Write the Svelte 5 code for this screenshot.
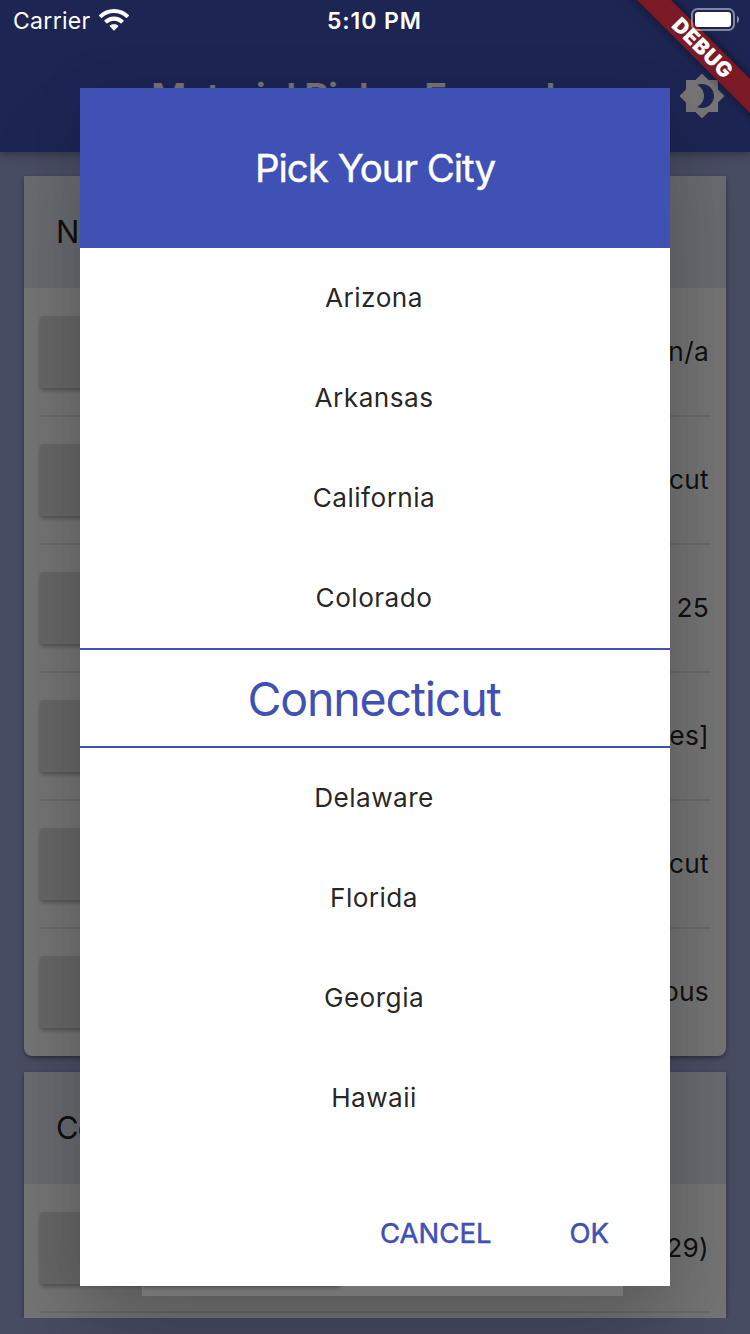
<script>
  const cities = ['Arizona', 'Arkansas', 'California', 'Colorado', 'Connecticut', 'Delaware', 'Florida', 'Georgia', 'Hawaii'];
  const selected = 'Connecticut';
  const cards = [
    { title: 'N', values: ['n/a', 'cut', '25', 'es]', 'cut', 'ous'] },
    { title: 'Co', values: ['29)', ''] }
  ];
</script>

<div class="screen">
  <header class="appbar">
    <h1>Material Picker Examples</h1>
    <svg class="theme" viewBox="0 0 24 24" width="48" height="48">
      <path d="M20 8.69V4h-4.69L12 .69 8.69 4H4v4.69L.69 12 4 15.31V20h4.69L12 23.31 15.31 20H20v-4.69L23.31 12 20 8.69zM12 18c-.89 0-1.74-.2-2.5-.55C11.56 16.5 13 14.42 13 12s-1.44-4.5-3.5-5.45C10.26 6.2 11.11 6 12 6c3.31 0 6 2.69 6 6s-2.69 6-6 6z" />
    </svg>
  </header>

  <main>
    {#each cards as card}
      <section class="card">
        <h2>{card.title}</h2>
        {#each card.values as value}
          <div class="row">
            <span class="button"></span>
            <span class="value">{value}</span>
          </div>
        {/each}
      </section>
    {/each}
  </main>

  <div class="scrim"></div>

  <div class="dialog">
    <div class="title">Pick Your City</div>
    <div class="wheel">
      {#each cities as city}
        <div class="city" class:selected={city === selected}><span>{city}</span></div>
      {/each}
    </div>
    <div class="actions">
      <span class="cancel">CANCEL</span>
      <span class="ok">OK</span>
    </div>
    <div class="gap"><i></i></div>
  </div>

  <div class="banner"><span>DEBUG</span></div>

  <div class="status">
    <span class="carrier">Carrier</span>
    <svg class="wifi" width="30" height="22" viewBox="0 0 30 22">
      <path d="M15 0C9.2 0 4 2.2.2 6c-.3.3-.3.7 0 1l1.8 1.8c.3.3.7.3 1 0C6.2 5.700 10.400 4 15 4s8.800 1.700 12 4.800c.3.3.7.3 1 0L29.800 7c.3-.3.3-.7 0-1C26 2.200 20.800 0 15 0z" />
      <path d="M15 7.600c-3.700 0-7 1.400-9.500 3.700-.3.3-.3.7 0 1l1.900 1.900c.3.3.7.3 1 0 1.800-1.600 4.100-2.500 6.600-2.500s4.800.9 6.600 2.500c.3.3.7.3 1 0l1.900-1.900c.3-.3.3-.7 0-1C22 9 18.700 7.600 15 7.600z" />
      <path d="M15 15.200c-1.600 0-3 .5-4.100 1.400-.3.3-.3.7 0 1l3.600 3.600c.3.3.7.3 1 0l3.600-3.600c.3-.3.3-.7 0-1-1.100-.9-2.500-1.400-4.100-1.400z" />
    </svg>
    <span class="time">5:10 PM</span>
    <svg class="battery" width="50" height="24" viewBox="0 0 50 24">
      <rect x="1" y="1" width="42" height="21" rx="5.500" fill="none" stroke="#fff" stroke-opacity=".45" stroke-width="2" />
      <rect x="4" y="4" width="36" height="15" rx="3" fill="#fff" />
      <path d="M46 8v7c1.300-.6 2-1.900 2-3.500S47.300 8.600 46 8z" fill="#fff" fill-opacity=".5" />
    </svg>
  </div>
</div>

<style>
  :global(body) { margin: 0; }
  .screen {
    position: relative;
    width: 750px;
    height: 1334px;
    overflow: hidden;
    display: flex;
    flex-direction: column;
    background: #9fa8da;
    font-family: Inter, "Liberation Sans", sans-serif;
    color: rgba(0, 0, 0, .87);
    white-space: nowrap;
  }
  .appbar {
    position: relative;
    z-index: 1;
    flex: none;
    box-sizing: border-box;
    height: 152px;
    padding: 41px 24px 0 151px;
    display: flex;
    align-items: center;
    justify-content: space-between;
    background: #3f51b5;
    color: #fff;
    box-shadow: 0 2px 6px rgba(0, 0, 0, .22), 0 4px 14px rgba(0, 0, 0, .12);
  }
  h1 { margin: 0; font-size: 38.500px; line-height: 48px; font-weight: 600; letter-spacing: -.9px; }
  .theme { fill: #fff; margin-top: -1px; }
  main {
    flex: none;
    height: 1166px;
    box-sizing: border-box;
    padding: 24px 24px 0;
    display: flex;
    flex-direction: column;
    gap: 16px;
    overflow: hidden;
  }
  .card {
    flex: none;
    background: #fff;
    border-radius: 0 0 8px 8px;
    box-shadow: 0 2px 4px rgba(0, 0, 0, .4);
  }
  h2 {
    margin: 0;
    height: 112px;
    padding-left: 32px;
    line-height: 112px;
    font-size: 31px;
    font-weight: 380;
    letter-spacing: -.8px;
    background: #e8eaf6;
  }
  .row {
    height: 128px;
    margin: 0 16px;
    display: flex;
    align-items: center;
    justify-content: space-between;
    background: linear-gradient(#e8e8e8, #e8e8e8) 0 127px / 100% 1px no-repeat,
      linear-gradient(#e8e8e8, #e8e8e8) 0 0 / 100% 1px no-repeat;
  }
  .row:nth-child(2) { background: linear-gradient(#e8e8e8, #e8e8e8) 0 127px / 100% 1px no-repeat; }
  .row:last-child { background: linear-gradient(#e8e8e8, #e8e8e8) 0 0 / 100% 1px no-repeat; }
  .button {
    width: 300px;
    height: 72px;
    border-radius: 4px;
    background: #e0e0e0;
    box-shadow: 0 3px 4px rgba(0, 0, 0, .24), 0 1px 3px rgba(0, 0, 0, .06);
  }
  .value { font-size: 26.300px; font-weight: 380; letter-spacing: .3px; padding: 0 1px 2px 0; }
  .scrim { position: absolute; z-index: 2; inset: 0; background: rgba(0, 0, 0, .54); }
  .dialog {
    position: absolute;
    z-index: 3;
    left: 80px;
    top: 88px;
    width: 590px;
    height: 1198px;
    display: flex;
    flex-direction: column;
    background: #fff;
    box-shadow: 0 60px 90px rgba(0, 0, 0, .2), 0 0 50px rgba(0, 0, 0, .08);
  }
  .title {
    height: 160px;
    line-height: 161px;
    text-align: center;
    font-size: 38.500px;
    font-weight: 400;
    -webkit-text-stroke: .4px #fff;
    letter-spacing: -1.050px;
    background: #3f51b5;
    color: #fff;
  }
  .city {
    height: 100px;
    box-sizing: border-box;
    padding: 0 2px 2px 0;
    display: flex;
    align-items: center;
    justify-content: center;
    font-size: 26.200px;
    font-weight: 380;
    letter-spacing: .45px;
  }
  .selected {
    padding: 1px 2px 0 0;
    border: solid #3f51b5;
    border-width: 2px 0;
    color: #3f51b5;
    font-size: 46.500px;
    letter-spacing: -1.200px;
  }
  .actions {
    flex: 1;
    display: flex;
    justify-content: flex-end;
    padding: 68px 61px 0 0;
    gap: 78px;
    line-height: 34px;
    font-size: 27.500px;
    font-weight: 400;
    -webkit-text-stroke: .5px #3f51b5;
    letter-spacing: 0;
    color: #3f51b5;
  }
  .gap {
    position: absolute;
    left: 62px;
    top: 1198px;
    width: 481px;
    height: 10px;
    overflow: hidden;
    background: #757575;
  }
  .gap i {
    display: block;
    width: 198px;
    height: 10px;
    margin-top: -10px;
    box-shadow: 0 1px 5px rgba(0, 0, 0, .4);
  }
  .banner {
    position: absolute;
    z-index: 4;
    left: 602px;
    top: 36px;
    width: 200px;
    height: 24px;
    transform: rotate(45deg);
    background: #7b1a25;
    box-shadow: 0 0 12px rgba(0, 0, 0, .5);
    color: #fff;
    text-align: center;
    line-height: 24px;
    font-size: 21px;
    font-weight: 900;
    letter-spacing: .6px;
    text-indent: 1px;
  }
  .status {
    position: absolute;
    z-index: 5;
    inset: 0 0 auto;
    height: 40px;
    color: #fff;
    display: flex;
    align-items: center;
    font-size: 23px;
  }
  .carrier { width: 86px; padding: 2px 0 0 13px; font-weight: 380; letter-spacing: .3px; }
  .wifi { fill: #fff; }
  .time { margin-left: 198px; padding-top: 2px; width: 96px; font-weight: 570; letter-spacing: .9px; }
  .battery { margin-left: 268px; }
</style>
